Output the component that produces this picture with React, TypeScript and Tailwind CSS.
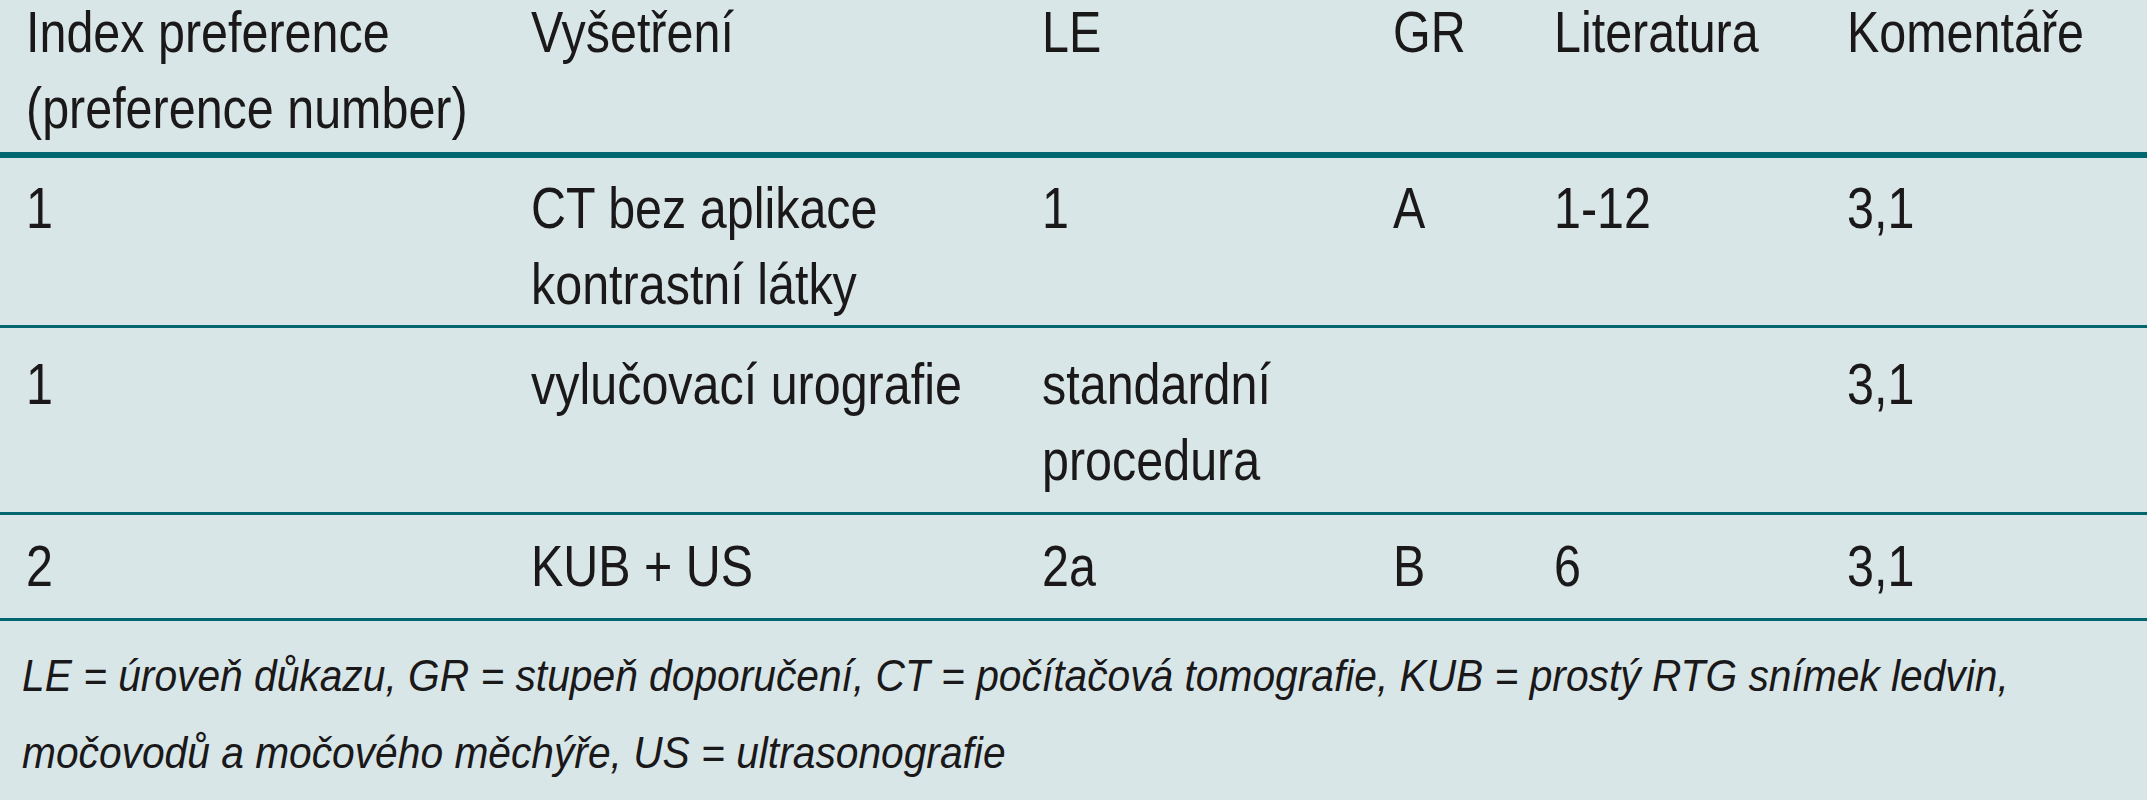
import type { ReactNode } from "react";

// the source face is a narrow grotesque; Liberation Sans squeezed sideways is the closest we have
function Narrow({ children }: { children: ReactNode }) {
  return (
    <span className="inline-block origin-left scale-x-[0.85] whitespace-nowrap">
      {children}
    </span>
  );
}

const rows = [
  {
    pref: "1",
    exam: ["CT bez aplikace", "kontrastní látky"],
    le: ["1"],
    gr: "A",
    lit: "1-12",
    comment: "3,1",
    box: "h-[170px] pt-[12px]",
  },
  {
    pref: "1",
    exam: ["vylučovací urografie"],
    le: ["standardní", "procedura"],
    gr: "",
    lit: "",
    comment: "3,1",
    box: "h-[187px] pt-[18px]",
  },
  {
    pref: "2",
    exam: ["KUB + US"],
    le: ["2a"],
    gr: "B",
    lit: "6",
    comment: "3,1",
    box: "h-[106px] pt-[13px]",
  },
];

const grid = "grid grid-cols-[505px_511px_351px_161px_293px_1fr] pl-[26px] pr-4";

function Lines({ lines }: { lines: string[] }) {
  return (
    <Narrow>
      {lines.map((l, i) => (
        <span key={i}>
          {i > 0 && <br />}
          {l}
        </span>
      ))}
    </Narrow>
  );
}

export default function App() {
  return (
    <div className="w-[2147px] h-[800px] bg-[#d9e6e8] text-[#1a1819] font-['Liberation_Sans',Arial,sans-serif] overflow-hidden">
      {/* header */}
      <div className="h-[164px] border-b-[6px] border-[#006670]">
        <div className={`${grid} -mt-[6px] text-[57px] leading-[76px]`}>
          <div>
            <Lines lines={["Index preference", "(preference number)"]} />
          </div>
          <div>
            <Narrow>Vyšetření</Narrow>
          </div>
          <div>
            <Narrow>LE</Narrow>
          </div>
          <div>
            <Narrow>GR</Narrow>
          </div>
          <div>
            <Narrow>Literatura</Narrow>
          </div>
          <div>
            <Narrow>Komentáře</Narrow>
          </div>
        </div>
      </div>

      {rows.map((row, i) => (
        <div key={i} className={`${row.box} border-b-[3px] border-[#006670]`}>
          <div className={`${grid} text-[57px] leading-[76px]`}>
            <div>
              <Narrow>{row.pref}</Narrow>
            </div>
            <div>
              <Lines lines={row.exam} />
            </div>
            <div>
              <Lines lines={row.le} />
            </div>
            <div>
              <Narrow>{row.gr}</Narrow>
            </div>
            <div>
              <Narrow>{row.lit}</Narrow>
            </div>
            <div>
              <Narrow>{row.comment}</Narrow>
            </div>
          </div>
        </div>
      ))}

      {/* legend */}
      <div className="pl-[22px] pt-[16px] text-[45px] leading-[77px] italic">
        <div className="origin-left scale-x-[0.905] whitespace-nowrap">
          LE = úroveň důkazu, GR = stupeň doporučení, CT = počítačová tomografie, KUB = prostý RTG snímek ledvin,
          <br />
          močovodů a močového měchýře, US = ultrasonografie
        </div>
      </div>
    </div>
  );
}
